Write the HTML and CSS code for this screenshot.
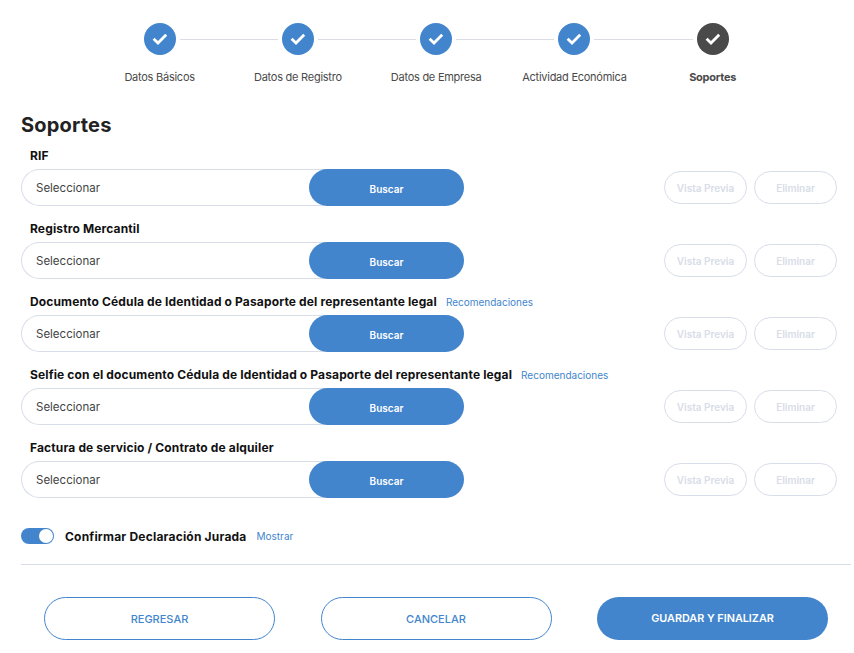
FILE: index.html
```html
<!DOCTYPE html>
<html lang="es">
<head>
    <meta charset="UTF-8">
    <meta name="viewport" content="width=device-width, initial-scale=1.0">
    <title>Soportes</title>
    <link rel="stylesheet" href="styles.css">
</head>
<body>

    <!-- Stepper -->
    <div class="stepper">
        <div class="step">
            <div class="step-top">
                <span class="circle"><svg viewBox="0 0 16 16" width="16" height="16"><path d="M1.6 7.8 L6 12 L14.2 3.8" fill="none" stroke="#fff" stroke-width="2.8"/></svg></span>
            </div>
            <div class="step-name">Datos Básicos</div>
        </div>
        <div class="step">
            <div class="step-top">
                <span class="circle"><svg viewBox="0 0 16 16" width="16" height="16"><path d="M1.6 7.8 L6 12 L14.2 3.8" fill="none" stroke="#fff" stroke-width="2.8"/></svg></span>
            </div>
            <div class="step-name">Datos de Registro</div>
        </div>
        <div class="step">
            <div class="step-top">
                <span class="circle"><svg viewBox="0 0 16 16" width="16" height="16"><path d="M1.6 7.8 L6 12 L14.2 3.8" fill="none" stroke="#fff" stroke-width="2.8"/></svg></span>
            </div>
            <div class="step-name">Datos de Empresa</div>
        </div>
        <div class="step">
            <div class="step-top">
                <span class="circle"><svg viewBox="0 0 16 16" width="16" height="16"><path d="M1.6 7.8 L6 12 L14.2 3.8" fill="none" stroke="#fff" stroke-width="2.8"/></svg></span>
            </div>
            <div class="step-name">Actividad Económica</div>
        </div>
        <div class="step step-current">
            <div class="step-top">
                <span class="circle"><svg viewBox="0 0 16 16" width="16" height="16"><path d="M1.6 7.8 L6 12 L14.2 3.8" fill="none" stroke="#fff" stroke-width="2.8"/></svg></span>
            </div>
            <div class="step-name">Soportes</div>
        </div>
    </div>

    <h1>Soportes</h1>

    <!-- Files -->
    <div class="field">
        <div class="field-label"><strong>RIF</strong></div>
        <div class="field-row">
            <div class="file-box"><span class="file-text">Seleccionar</span><button class="btn-search">Buscar</button></div>
            <div class="file-actions"><button class="btn-off">Vista Previa</button><button class="btn-off">Eliminar</button></div>
        </div>
    </div>

    <div class="field">
        <div class="field-label"><strong>Registro Mercantil</strong></div>
        <div class="field-row">
            <div class="file-box"><span class="file-text">Seleccionar</span><button class="btn-search">Buscar</button></div>
            <div class="file-actions"><button class="btn-off">Vista Previa</button><button class="btn-off">Eliminar</button></div>
        </div>
    </div>

    <div class="field">
        <div class="field-label"><strong>Documento Cédula de Identidad o Pasaporte del representante legal</strong><a class="link">Recomendaciones</a></div>
        <div class="field-row">
            <div class="file-box"><span class="file-text">Seleccionar</span><button class="btn-search">Buscar</button></div>
            <div class="file-actions"><button class="btn-off">Vista Previa</button><button class="btn-off">Eliminar</button></div>
        </div>
    </div>

    <div class="field">
        <div class="field-label"><strong>Selfie con el documento Cédula de Identidad o Pasaporte del representante legal</strong><a class="link">Recomendaciones</a></div>
        <div class="field-row">
            <div class="file-box"><span class="file-text">Seleccionar</span><button class="btn-search">Buscar</button></div>
            <div class="file-actions"><button class="btn-off">Vista Previa</button><button class="btn-off">Eliminar</button></div>
        </div>
    </div>

    <div class="field">
        <div class="field-label"><strong>Factura de servicio / Contrato de alquiler</strong></div>
        <div class="field-row">
            <div class="file-box"><span class="file-text">Seleccionar</span><button class="btn-search">Buscar</button></div>
            <div class="file-actions"><button class="btn-off">Vista Previa</button><button class="btn-off">Eliminar</button></div>
        </div>
    </div>

    <!-- Declaration -->
    <div class="confirm">
        <span class="toggle"><span class="knob"></span></span>
        <strong>Confirmar Declaración Jurada</strong>
        <a class="link">Mostrar</a>
    </div>

    <!-- Footer buttons -->
    <div class="footer">
        <button class="btn-line">REGRESAR</button>
        <button class="btn-line">CANCELAR</button>
        <button class="btn-fill">GUARDAR Y FINALIZAR</button>
    </div>

</body>
</html>
```

FILE: styles.css
```css
body {
    font-family: 'Inter', 'Liberation Sans', sans-serif;
    background-color: #fff;
    color: #333;
    margin: 0;
    padding: 0 3px 0 21px;
    height: 653px;
    box-sizing: border-box;
    overflow: hidden;
}
button {
    font-family: inherit;
    cursor: pointer;
}

.stepper {
    display: grid;
    grid-template-columns: repeat(5, 138.25px);
    margin-left: 69.5px;
    padding-top: 23px;
}
.step {
    text-align: center;
}
.step-top {
    position: relative;
    height: 32px;
    display: flex;
    justify-content: center;
}
.step-top::after {
    content: "";
    position: absolute;
    left: calc(50% + 20px);
    right: calc(-50% + 20px);
    top: 16px;
    border-top: 1px solid #dcdce6;
}
.step:last-child .step-top::after {
    display: none;
}
.circle {
    width: 32px;
    height: 32px;
    border-radius: 50%;
    background-color: #4285cd;
    display: flex;
    align-items: center;
    justify-content: center;
}
.step-current .circle {
    background-color: #4a4a4a;
}
.step-name {
    margin-top: 14px;
    font-size: 11px;
    line-height: 16px;
    letter-spacing: -0.25px;
    color: #4a4a4a;
    white-space: nowrap;
}
.step-current .step-name {
    font-weight: 700;
}

h1 {
    margin: 27px 0 8px;
    font-size: 20px;
    line-height: 26px;
    font-weight: 700;
    letter-spacing: 0.2px;
    color: #222;
}

.field {
    height: 73px;
}
.field-label {
    padding-left: 9px;
    height: 23px;
    line-height: 20px;
    font-size: 12px;
    letter-spacing: 0.14px;
    color: #111;
    white-space: nowrap;
}
.field-label strong {
    font-weight: 700;
}
.link {
    font-size: 10px;
    letter-spacing: 0;
    color: #4285cd;
    margin-left: 9px;
}
.field-row {
    display: flex;
    align-items: center;
    justify-content: space-between;
    padding-right: 14px;
}
.file-box {
    width: 443px;
    height: 37px;
    box-sizing: border-box;
    border: 1px solid #d8dde8;
    border-right: none;
    border-radius: 19px;
    display: flex;
    align-items: center;
    justify-content: space-between;
}
.file-text {
    padding-left: 14px;
    font-size: 11.5px;
    color: #444;
}
.btn-search {
    width: 155px;
    height: 37px;
    margin: -1px 0;
    border: none;
    border-radius: 19px;
    background-color: #4285cd;
    color: #fff;
    font-size: 10px;
    font-weight: 600;
    padding-top: 3px;
}
.file-actions {
    display: flex;
    gap: 7px;
}
.btn-off {
    width: 83px;
    height: 33px;
    background-color: #fff;
    border: 1px solid #d8dde8;
    border-radius: 17px;
    color: #d8dde8;
    font-size: 10px;
    font-weight: 600;
    padding: 0;
}

.confirm {
    display: flex;
    align-items: center;
    margin-top: 17px;
    height: 16px;
    font-size: 12px;
    letter-spacing: 0.2px;
    color: #111;
}
.confirm .link {
    margin-left: 10px;
}
.toggle {
    width: 33px;
    height: 16px;
    border-radius: 8px;
    background-color: #4285cd;
    margin-right: 11px;
    display: flex;
    justify-content: flex-end;
    align-items: center;
}
.knob {
    width: 14px;
    height: 14px;
    margin-right: 1px;
    border-radius: 50%;
    background-color: #fff;
}

.footer {
    margin-top: 20px;
    border-top: 1px solid #d8dde8;
    padding: 32px 23px 0;
    display: flex;
    justify-content: space-between;
}
.btn-line, .btn-fill {
    width: 231px;
    height: 43px;
    border-radius: 22px;
    font-size: 11px;
    font-weight: 500;
}
.btn-line {
    background-color: #fff;
    border: 1px solid #4285cd;
    color: #4285cd;
}
.btn-fill {
    background-color: #4285cd;
    border: none;
    color: #fff;
    font-size: 10.8px;
    font-weight: 600;
}
```
